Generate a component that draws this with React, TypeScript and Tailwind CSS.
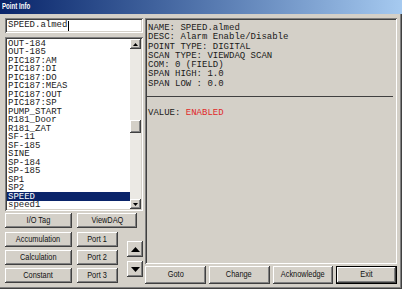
const items = [
  "OUT-184",
  "OUT-185",
  "PIC187:AM",
  "PIC187:DI",
  "PIC187:DO",
  "PIC187:MEAS",
  "PIC187:OUT",
  "PIC187:SP",
  "PUMP_START",
  "R181_Door",
  "R181_ZAT",
  "SF-11",
  "SF-185",
  "SINE",
  "SP-184",
  "SP-185",
  "SP1",
  "SP2",
  "SPEED",
  "speed1",
];

const info = [
  "NAME: SPEED.almed",
  "DESC: Alarm Enable/Disable",
  "POINT TYPE: DIGITAL",
  "SCAN TYPE: VIEWDAQ SCAN",
  "COM: 0 (FIELD)",
  "SPAN HIGH: 1.0",
  "SPAN LOW : 0.0",
];

const raised =
  "shadow-[inset_-1px_-1px_0_#404040,inset_1px_1px_0_#ffffff,inset_-2px_-2px_0_#808080,inset_2px_2px_0_#d4d0c8]";
const sunken =
  "shadow-[inset_1px_1px_0_#808080,inset_-1px_-1px_0_#ffffff,inset_2px_2px_0_#404040,inset_-2px_-2px_0_#d4d0c8]";

function Btn({
  label,
  className = "",
  def = false,
}: {
  label: string;
  className?: string;
  def?: boolean;
}) {
  return (
    <div
      className={`flex items-center justify-center bg-[#d4d0c8] text-[#111] text-[9px] font-['Liberation_Sans',Arial,sans-serif] ${
        def
          ? "shadow-[inset_0_0_0_1px_#000000,inset_-2px_-2px_0_#404040,inset_2px_2px_0_#ffffff,inset_-3px_-3px_0_#808080]"
          : raised
      } ${className}`}
    >
      <span className="inline-block scale-x-[0.82] whitespace-nowrap">
        {label}
      </span>
    </div>
  );
}

function Tri({ up, w, h }: { up: boolean; w: number; h: number }) {
  return (
    <svg width={w} height={h} viewBox={`0 0 ${w} ${h}`}>
      <polygon
        points={up ? `0,${h} ${w},${h} ${w / 2},0` : `0,0 ${w},0 ${w / 2},${h}`}
        fill="#000"
      />
    </svg>
  );
}

function ListBox() {
  return (
    <div className={`mt-[4px] h-[174px] bg-white p-[2px] flex ${sunken}`}>
      <div className="flex-1 flex flex-col font-['Liberation_Mono','Courier_New',monospace] text-[9px] leading-[8.5px]">
        {items.map((it) => (
          <div
            key={it}
            className={`h-[8.5px] pl-[1px] pt-[0.5px] whitespace-nowrap ${
              it === "SPEED" ? "bg-[#0a246a] text-white" : "text-[#1a1a1a]"
            }`}
          >
            {it}
          </div>
        ))}
      </div>
      {/* scrollbar */}
      <div className="w-[11px] flex flex-col bg-[#ebe9e4]">
        <div className={`h-[10px] bg-[#d4d0c8] flex items-center justify-center ${raised}`}>
          <Tri up w={5} h={3} />
        </div>
        <div className="h-[71px]" />
        <div className={`h-[13px] bg-[#d4d0c8] ${raised}`} />
        <div className="flex-1" />
        <div className={`h-[10px] bg-[#d4d0c8] flex items-center justify-center ${raised}`}>
          <Tri up={false} w={5} h={3} />
        </div>
      </div>
    </div>
  );
}

export default function App() {
  return (
    <div className="w-[402px] h-[289px] bg-[#d4d0c8] overflow-hidden flex flex-col shadow-[inset_-1px_-1px_0_#404040,inset_-2px_-2px_0_#808080]">
      {/* Title bar */}
      <div className="h-[14px] bg-linear-to-r from-[#0a246a] to-[#a6caf0] flex items-center pl-[2px]">
        <span className="inline-block origin-left scale-x-[0.68] text-white font-bold text-[9px] font-['Liberation_Sans',Arial,sans-serif] whitespace-nowrap">
          Point Info
        </span>
      </div>

      <div className="flex pl-[5px] pt-[4px] gap-[2px]">
        {/* Left column */}
        <div className="w-[138px] flex flex-col">
          <div className={`h-[15px] bg-white flex items-center pl-[3px] ${sunken}`}>
            <span className="font-['Liberation_Mono','Courier_New',monospace] text-[9px] text-[#1a1a1a] whitespace-nowrap">
              SPEED.almed
            </span>
            <span className="w-px h-[10px] bg-black ml-[1px]" />
          </div>

          <ListBox />

          <div className="flex gap-[5px] mt-[2px]">
            <Btn label="I/O Tag" className="w-[67px] h-[15px]" />
            <Btn label="ViewDAQ" className="w-[60px] h-[15px]" />
          </div>

          <div className="flex mt-[4px]">
            <div className="flex flex-col gap-[3px] w-[67px]">
              <Btn label="Accumulation" className="h-[15px]" />
              <Btn label="Calculation" className="h-[15px]" />
              <Btn label="Constant" className="h-[15px]" />
            </div>
            <div className="flex flex-col gap-[3px] w-[41px] ml-[5px]">
              <Btn label="Port 1" className="h-[15px]" />
              <Btn label="Port 2" className="h-[15px]" />
              <Btn label="Port 3" className="h-[15px]" />
            </div>
            <div className="flex flex-col gap-[4px] w-[16px] ml-[9px] mt-[9px]">
              <div className={`h-[16px] bg-[#d4d0c8] flex items-center justify-center ${raised}`}>
                <Tri up w={9} h={5} />
              </div>
              <div className={`h-[16px] bg-[#d4d0c8] flex items-center justify-center ${raised}`}>
                <Tri up={false} w={9} h={5} />
              </div>
            </div>
          </div>
        </div>

        {/* Right column */}
        <div className="w-[252px] flex flex-col">
          <div className={`h-[246px] p-[2px] ${sunken}`}>
            <div className="pt-[4px] pl-[1px] font-['Liberation_Mono','Courier_New',monospace] text-[9px] leading-[9.3px] text-[#1a1a1a]">
              {info.map((l) => (
                <div key={l} className="whitespace-pre">
                  {l}
                </div>
              ))}
            </div>
            <div className="h-px bg-[#404040] mt-[7px] mr-[2px]" />
            <div className="mt-[12px] pl-[1px] font-['Liberation_Mono','Courier_New',monospace] text-[9px] leading-[9.3px] text-[#1a1a1a] whitespace-pre">
              VALUE: <span className="text-[#e02828]">ENABLED</span>
            </div>
          </div>
          <div className="flex gap-[3px] mt-[2px]">
            <Btn label="Goto" className="flex-1 h-[18px]" />
            <Btn label="Change" className="flex-1 h-[18px]" />
            <Btn label="Acknowledge" className="flex-1 h-[18px]" />
            <Btn label="Exit" def className="flex-1 h-[18px]" />
          </div>
        </div>
      </div>
    </div>
  );
}
